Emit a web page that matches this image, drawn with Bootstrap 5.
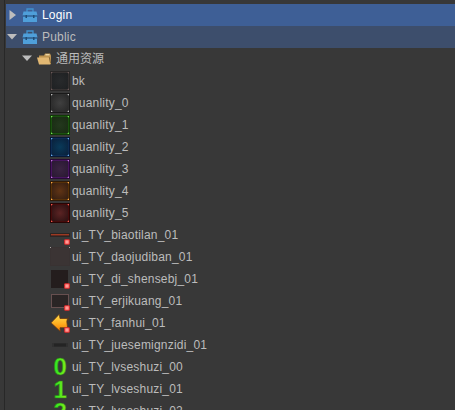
<!DOCTYPE html>
<html lang="zh">
<head>
<meta charset="utf-8">
<title>Resources</title>
<link href="https://cdn.jsdelivr.net/npm/bootstrap@5.3.0/dist/css/bootstrap.min.css" rel="stylesheet">
<style>
body{background:#383838;font-family:"Liberation Sans","Noto Sans CJK SC",sans-serif;font-size:12px;line-height:22px;color:#bcbcbc;letter-spacing:.2px}
.panel{height:410px;padding-top:4px}
.gutter{width:6px;height:410px;border-right:1px solid #282828}
.gutter{width:5px}
.tree-row{height:22px;flex:none;white-space:pre;margin-left:1px}
.tree-row svg{flex:none;display:block}
.lv0{padding-left:1px}
.lv1{padding-left:16px}
.lv2{padding-left:44px}
.lv2 svg{margin-right:2px}
.arrow{width:11px;height:22px;margin-right:4px}
.pack{width:16px;height:16px;margin-right:4px}
.folder{margin-right:4px}
.sel{background:#3e5f96;color:#fff}
.sub{background:#3d4e6c}
.cjk{letter-spacing:0}
.digit{font:bold 24px/20px "Liberation Sans",sans-serif;letter-spacing:0}
</style>
</head>
<body class="overflow-hidden">
<svg width="0" height="0" class="position-absolute">
<defs>
<linearGradient id="gold" x2="0" y2="1"><stop stop-color="#ffdf50"/><stop offset=".55" stop-color="#ffae20"/><stop offset="1" stop-color="#ee7800"/></linearGradient>
<linearGradient id="lime" x2="1" y2="0"><stop stop-color="#22e524"/><stop offset="1" stop-color="#86ee18"/></linearGradient>
<radialGradient id="g0"><stop stop-color="#282a2c"/><stop offset="1" stop-color="#202224"/></radialGradient>
<radialGradient id="g1"><stop stop-color="#404040"/><stop offset="1" stop-color="#2b2b2b"/></radialGradient>
<radialGradient id="g2"><stop stop-color="#23381d"/><stop offset="1" stop-color="#1a2d14"/></radialGradient>
<radialGradient id="g3"><stop stop-color="#093a59"/><stop offset="1" stop-color="#0a2440"/></radialGradient>
<radialGradient id="g4"><stop stop-color="#3b2442"/><stop offset="1" stop-color="#2c1a35"/></radialGradient>
<radialGradient id="g5"><stop stop-color="#603415"/><stop offset="1" stop-color="#3a2112"/></radialGradient>
<radialGradient id="g6"><stop stop-color="#5c2424"/><stop offset="1" stop-color="#321314"/></radialGradient>
<symbol id="box" viewBox="0 0 16 16"><path d="M5 5V2h6v3" fill="none" stroke="#4293cf" stroke-width="1.3"/><path d="M1.5 4.5h13l1 4H.5zM1 9.5h14V15H1z" fill="#4f9fda"/><path d="M.5 8.5h15v1H.5z" fill="#2b6395"/><path d="M3.5 8h1.5v3H3.5zM11 8h1.5v3H11z" fill="#1f4d76"/></symbol>
<symbol id="dot" viewBox="0 0 6 6"><rect x=".2" y=".2" width="5.6" height="5.6" rx="1.2" fill="#ee2f2f"/><rect x="1.3" y="1.3" width="3.4" height="3.4" fill="#ff9b96"/></symbol>
<symbol id="corners" viewBox="0 0 20 20"><path d="M1 1h1v1H1zM18 1h1v1h-1zM1 18h1v1H1zM18 18h1v1h-1z" fill="currentColor"/><path d="M2 1h1v1H2zM1 2h1v1H1zM17 1h1v1h-1zM18 2h1v1h-1zM1 17h1v1H1zM2 18h1v1H2zM18 17h1v1h-1zM17 18h1v1h-1z" fill="currentColor" opacity=".35"/></symbol>
</defs>
</svg>
<main class="d-flex overflow-hidden vh-100">
<div class="gutter flex-shrink-0"></div>
<div class="panel d-flex flex-column flex-grow-1 overflow-hidden">
<div class="tree-row sel lv0 d-flex align-items-center"><svg class="arrow" viewBox="0 0 11 22"><path d="M2.5 6v10L9 11z" fill="#bdbdbd"/></svg><svg class="pack"><use href="#box"/></svg><span>Login</span></div>
<div class="tree-row sub lv0 d-flex align-items-center"><svg class="arrow" viewBox="0 0 11 22"><path d="M0 8h10l-5 5.5z" fill="#bdbdbd"/></svg><svg class="pack"><use href="#box"/></svg><span>Public</span></div>
<div class="tree-row lv1 d-flex align-items-center"><svg class="arrow" viewBox="0 0 11 22"><path d="M0 7.5h10l-5 5.5z" fill="#bdbdbd"/></svg><svg class="folder" width="15" height="14" viewBox="0 0 15 14"><path d="M2 12V3.5h5l1-2h5l1 2V12z" fill="#bd9350"/><path d="M8.5 2.3h4v1h-4z" fill="#fff0c8"/><path d="M0 5.5h12l1.5 7H2z" fill="#e2b873"/><path d="M12.3 5.2l1.2 6" stroke="#71572f" fill="none" stroke-width=".8"/></svg><span class="cjk">通用资源</span></div>
<div class="tree-row lv2 d-flex align-items-center"><svg width="20" height="20"><rect x=".5" y=".5" width="19" height="19" fill="url(#g0)" stroke="#292727"/><rect x="1.5" y="1.5" width="17" height="17" fill="none" stroke="#353131"/><use href="#corners" color="#6b5959"/></svg><span>bk</span></div>
<div class="tree-row lv2 d-flex align-items-center"><svg width="20" height="20"><rect x=".5" y=".5" width="19" height="19" fill="url(#g1)" stroke="#191919"/><rect x="1.5" y="1.5" width="17" height="17" fill="none" stroke="#2f2f2f"/><use href="#corners" color="#bbb"/></svg><span>quanlity_0</span></div>
<div class="tree-row lv2 d-flex align-items-center"><svg width="20" height="20"><rect x=".5" y=".5" width="19" height="19" fill="url(#g2)" stroke="#103b06"/><rect x="1.5" y="1.5" width="17" height="17" fill="none" stroke="#1b5010"/><use href="#corners" color="#75e254"/></svg><span>quanlity_1</span></div>
<div class="tree-row lv2 d-flex align-items-center"><svg width="20" height="20"><rect x=".5" y=".5" width="19" height="19" fill="url(#g3)" stroke="#071937"/><rect x="1.5" y="1.5" width="17" height="17" fill="none" stroke="#0e2d54"/><use href="#corners" color="#67aef0"/></svg><span>quanlity_2</span></div>
<div class="tree-row lv2 d-flex align-items-center"><svg width="20" height="20"><rect x=".5" y=".5" width="19" height="19" fill="url(#g4)" stroke="#290838"/><rect x="1.5" y="1.5" width="17" height="17" fill="none" stroke="#481560"/><use href="#corners" color="#c276dc"/></svg><span>quanlity_3</span></div>
<div class="tree-row lv2 d-flex align-items-center"><svg width="20" height="20"><rect x=".5" y=".5" width="19" height="19" fill="url(#g5)" stroke="#301b08"/><rect x="1.5" y="1.5" width="17" height="17" fill="none" stroke="#573108"/><use href="#corners" color="#ffa944"/></svg><span>quanlity_4</span></div>
<div class="tree-row lv2 d-flex align-items-center"><svg width="20" height="20"><rect x=".5" y=".5" width="19" height="19" fill="url(#g6)" stroke="#260505"/><rect x="1.5" y="1.5" width="17" height="17" fill="none" stroke="#460c0c"/><use href="#corners" color="#f45a4c"/></svg><span>quanlity_5</span></div>
<div class="tree-row lv2 d-flex align-items-center"><svg width="20" height="20"><path d="M0 8h20v4H0z" fill="#2c2523"/><path d="M1 9.5h18" stroke="#9d3a22"/><path d="M1 10.5h18" stroke="#5d2820"/><use href="#dot" x="14" y="14" width="6" height="6"/></svg><span>ui_TY_biaotilan_01</span></div>
<div class="tree-row lv2 d-flex align-items-center"><svg width="20" height="20"><rect x=".5" y=".5" width="19" height="18" fill="#3b3434" stroke="#393232"/><path d="M0 0h1v1H0zM19 0h1v1h-1z" fill="#aaa5a5"/></svg><span>ui_TY_daojudiban_01</span></div>
<div class="tree-row lv2 d-flex align-items-center"><svg width="20" height="20"><rect x="1" y="1" width="17" height="18" fill="#241d1d"/><use href="#dot" x="14" y="14" width="6" height="6"/></svg><span>ui_TY_di_shensebj_01</span></div>
<div class="tree-row lv2 d-flex align-items-center"><svg width="20" height="20"><rect x="1.5" y="3.5" width="17" height="13" fill="#2a2525" stroke="#675050"/><use href="#dot" x="14" y="14" width="6" height="6"/></svg><span>ui_TY_erjikuang_01</span></div>
<div class="tree-row lv2 d-flex align-items-center"><svg width="20" height="20"><path d="M1 9.8L9.3 1.2l.7 4.3h7.5l-.7 3 .8 6.3H10l.3 3.7z" fill="url(#gold)" stroke="#623715" stroke-width=".8"/><path d="M17.5 5.5l1.2-1.8-.4 5" fill="none" stroke="#513821"/><use href="#dot" x="14" y="14" width="6" height="6"/></svg><span>ui_TY_fanhui_01</span></div>
<div class="tree-row lv2 d-flex align-items-center"><svg width="20" height="20"><path d="M2 8h16v4H2z" fill="#303030"/><path d="M4 8.5h12v3H4z" fill="#242424"/></svg><span>ui_TY_juesemignzidi_01</span></div>
<div class="tree-row lv2 d-flex align-items-center"><svg width="20" height="20"><text class="digit" x="3.5" y="18" fill="url(#lime)" stroke="#2b7a17" stroke-width=".5">0</text></svg><span>ui_TY_lvseshuzi_00</span></div>
<div class="tree-row lv2 d-flex align-items-center"><svg width="20" height="20"><text class="digit" x="3.5" y="18.5" fill="url(#lime)" stroke="#2b7a17" stroke-width=".5">1</text></svg><span>ui_TY_lvseshuzi_01</span></div>
<div class="tree-row lv2 d-flex align-items-center"><svg width="20" height="20"><text class="digit" x="3.5" y="18.5" fill="url(#lime)" stroke="#2b7a17" stroke-width=".5">2</text></svg><span>ui_TY_lvseshuzi_02</span></div>
</div>
</main>
<script src="https://cdn.jsdelivr.net/npm/bootstrap@5.3.0/dist/js/bootstrap.bundle.min.js"></script>
</body>
</html>
